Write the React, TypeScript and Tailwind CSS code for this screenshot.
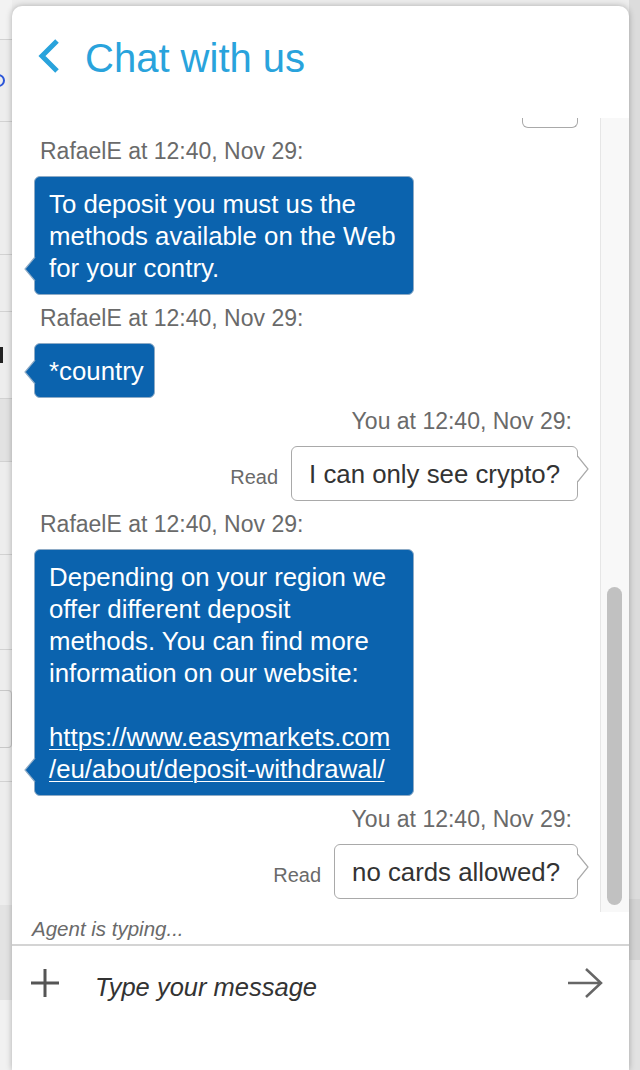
import React from "react";

function AgentTail() {
  return (
    <svg className="absolute left-[-11px] bottom-[13px]" width="12" height="24" viewBox="0 0 12 24">
      <path d="M12 -1 L1 12 L12 25 Z" fill="#0b63ae" />
      <path d="M11 0 L1 12 L11 24" fill="none" stroke="#8eabc6" strokeWidth="1.2" />
    </svg>
  );
}

function UserTail() {
  return (
    <svg className="absolute right-[-12px] top-[9px]" width="12" height="26" viewBox="0 0 12 26">
      <path d="M-1 -1 L11 13 L-1 27 Z" fill="#ffffff" />
      <path d="M0.5 0 L11 13 L0.5 26" fill="none" stroke="#a9a9a9" strokeWidth="1.2" />
    </svg>
  );
}

function AgentName() {
  return (
    <div className="mt-[9px] ml-[6px] text-[23px] leading-[28px] text-[#6a6a6a] whitespace-nowrap">
      RafaelE at 12:40, Nov 29:
    </div>
  );
}

function UserName() {
  return (
    <div className="mt-[9px] mr-[6px] self-end text-[23px] leading-[28px] text-[#6a6a6a] whitespace-nowrap">
      You at 12:40, Nov 29:
    </div>
  );
}

function AgentBubble({ children, wide }: { children: React.ReactNode; wide?: boolean }) {
  return (
    <div
      className={
        "relative mt-[11px] self-start bg-[#0b63ae] border border-[#8eabc6] rounded-[6px] pl-[14px] pr-[10px] py-[10.5px] text-white text-[25.8px] leading-[32px] " +
        (wide ? "w-[380px]" : "")
      }
    >
      {children}
      <AgentTail />
    </div>
  );
}

function UserMessage({ text }: { text: string }) {
  return (
    <div className="mt-[11px] self-end flex items-center gap-[13px]">
      <div className="mt-[6px] text-[20px] leading-[24px] text-[#6a6a6a]">Read</div>
      <div className="relative bg-white border border-[#a9a9a9] rounded-[6px] px-[17px] py-[10.5px] text-[#333333] text-[25.8px] leading-[32px] whitespace-nowrap">
        {text}
        <UserTail />
      </div>
    </div>
  );
}

function LeftStrip() {
  return (
    <div className="w-[12px] shrink-0 flex flex-col bg-[#ededed] overflow-hidden">
      <div className="h-[40px] border-b border-[#d2d2d2] bg-[#f2f2f2]" />
      <div className="h-[82px] border-b border-[#d2d2d2] flex items-center">
        <div className="-ml-[8px] w-[13px] h-[13px] rounded-full border-2 border-[#2b55d8] shrink-0" />
      </div>
      <div className="h-[133px] border-b border-[#d2d2d2]" />
      <div className="h-[57px] border-b border-[#d2d2d2]" />
      <div className="h-[86px] flex items-center">
        <div className="w-[3px] h-[16px] bg-[#222]" />
      </div>
      <div className="h-[64px] bg-[#e2e2e2] border-y border-[#d2d2d2]" />
      <div className="h-[93px] border-b border-[#d2d2d2]" />
      <div className="h-[95px] border-b border-[#d2d2d2]" />
      <div className="h-[40px]" />
      <div className="h-[58px] border border-l-0 border-[#c8c8c8] rounded-r-[4px] -ml-[4px]" />
      <div className="h-[34px] border-b border-[#d2d2d2]" />
      <div className="h-[123px]" />
      <div className="h-[95px] bg-[#e3e3e3]" />
      <div className="flex-1 bg-[#f1f1f1]" />
    </div>
  );
}

export default function App() {
  return (
    <div className="w-[640px] h-[1070px] flex bg-[#ededed] overflow-hidden font-['Liberation_Sans',Arial,Helvetica,sans-serif]">
      <LeftStrip />
      <div className="mt-[6px] w-[617px] shrink-0 bg-white rounded-t-[10px] shadow-[0_0_6px_rgba(0,0,0,0.28)] flex flex-col relative z-10">
        {/* Header */}
        <div className="h-[112px] shrink-0 flex items-center pb-[8px]">
          <svg className="ml-[25px] -mt-[4px]" width="24" height="36" viewBox="0 0 24 36">
            <path d="M20 3 L5 18 L20 33" fill="none" stroke="#29a3dc" strokeWidth="5" strokeLinejoin="miter" />
          </svg>
          <div className="ml-[24px] text-[40px] leading-[40px] text-[#29a3dc] whitespace-nowrap">Chat with us</div>
        </div>

        {/* Messages */}
        <div className="h-[794px] shrink-0 flex">
          <div className="flex-1 flex flex-col pl-[22px] pr-[22px] overflow-hidden">
            <div className="self-end w-[56px] h-[10px] border border-t-0 border-[#a9a9a9] rounded-b-[6px]" />

            <AgentName />
            <AgentBubble wide>
              <div className="whitespace-nowrap">To deposit you must us the</div>
              <div className="whitespace-nowrap">methods available on the Web</div>
              <div className="whitespace-nowrap">for your contry.</div>
            </AgentBubble>

            <AgentName />
            <AgentBubble>
              <div className="whitespace-nowrap">*country</div>
            </AgentBubble>

            <UserName />
            <UserMessage text="I can only see crypto?" />

            <AgentName />
            <AgentBubble wide>
              <div className="whitespace-nowrap">Depending on your region we</div>
              <div className="whitespace-nowrap">offer different deposit</div>
              <div className="whitespace-nowrap">methods. You can find more</div>
              <div className="whitespace-nowrap">information on our website:</div>
              <div className="h-[32px]" />
              <div className="whitespace-nowrap underline decoration-1 underline-offset-[3px]">https://www.easymarkets.com</div>
              <div className="whitespace-nowrap underline decoration-1 underline-offset-[3px]">/eu/about/deposit-withdrawal/</div>
            </AgentBubble>

            <UserName />
            <UserMessage text="no cards allowed?" />
          </div>
          <div className="w-[29px] shrink-0 border-l border-[#e6e6e6] bg-[#f8f8f8] flex flex-col pt-[469px] pl-[6px]">
            <div className="w-[15px] h-[318px] rounded-full bg-[#c1c1c1]" />
          </div>
        </div>

        {/* Typing */}
        <div className="h-[34px] shrink-0 flex items-center pl-[20px] pt-[3px] border-b-2 border-[#d4d4d4]">
          <span className="italic text-[20.5px] text-[#6a6a6a]">Agent is typing...</span>
        </div>

        {/* Input */}
        <div className="h-[74px] shrink-0 flex items-center pl-[18px] pr-[26px]">
          <svg width="30" height="30" viewBox="0 0 30 30">
            <path d="M15 1 V29 M1 15 H29" stroke="#555555" strokeWidth="3" fill="none" />
          </svg>
          <div className="ml-[35px] mt-[8px] italic text-[25.5px] text-[#333333] whitespace-nowrap">Type your message</div>
          <div className="flex-1" />
          <svg width="36" height="32" viewBox="0 0 36 32">
            <path d="M1 16 H34 M19 2 L34 16 L19 30" stroke="#666666" strokeWidth="2.5" fill="none" />
          </svg>
        </div>
        <div className="flex-1" />
      </div>
      <div className="flex-1 flex flex-col bg-[#dcdcdc]">
        <div className="h-[899px]" />
        <div className="h-[61px] bg-[#d3d3d3]" />
        <div className="flex-1 bg-[#e2e2e2]" />
      </div>
    </div>
  );
}
